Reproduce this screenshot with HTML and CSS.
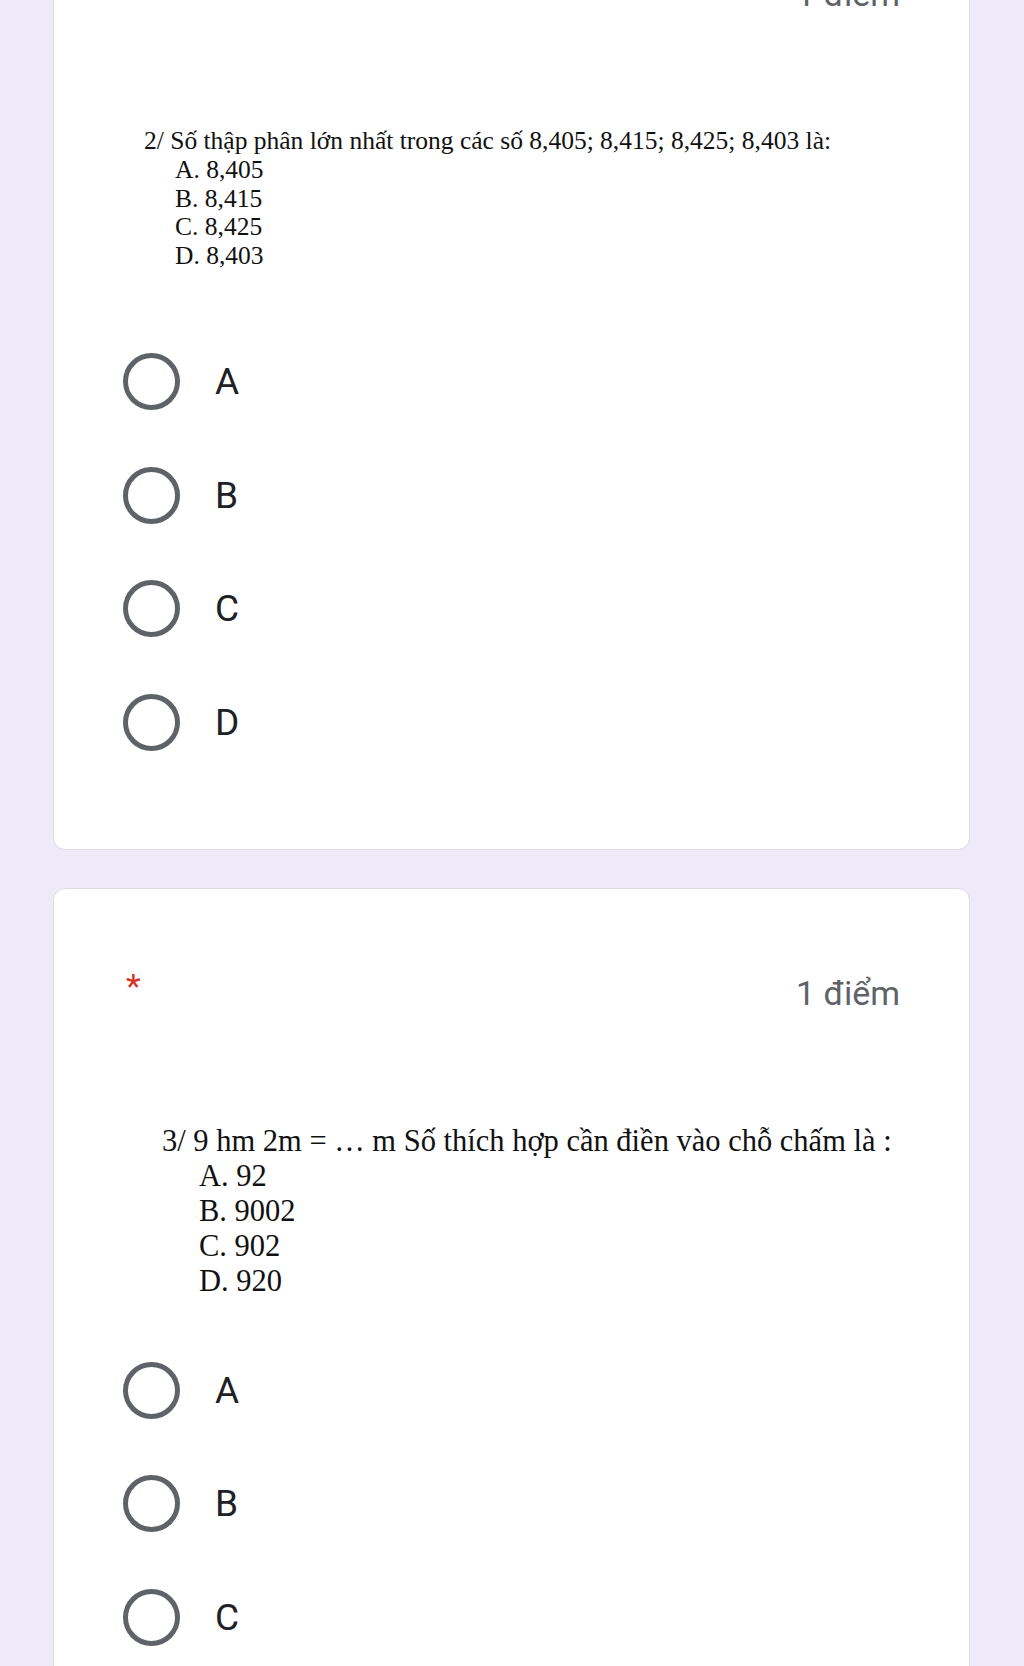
FILE: index.html
```html
<!DOCTYPE html>
<html lang="vi">
<head>
<meta charset="utf-8">
<title>Biểu mẫu</title>
<link rel="stylesheet" href="styles.css">
</head>
<body>
<main class="form">
  <section class="card card-first">
    <div class="card-head">
      <span class="req">*</span>
      <span class="points">1 điểm</span>
    </div>
    <div class="question q-small">
      <p class="q-title">2/ Số thập phân lớn nhất trong các số 8,405; 8,415; 8,425; 8,403 là:</p>
      <ul class="q-choices">
        <li>A. 8,405</li>
        <li>B. 8,415</li>
        <li>C. 8,425</li>
        <li>D. 8,403</li>
      </ul>
    </div>
    <div class="options options-first">
      <label class="option"><span class="radio"></span><span class="opt-label">A</span></label>
      <label class="option"><span class="radio"></span><span class="opt-label">B</span></label>
      <label class="option"><span class="radio"></span><span class="opt-label">C</span></label>
      <label class="option"><span class="radio"></span><span class="opt-label">D</span></label>
    </div>
  </section>

  <section class="card card-second">
    <div class="card-head">
      <span class="req">*</span>
      <span class="points">1 điểm</span>
    </div>
    <div class="question q-large">
      <p class="q-title">3/ 9 hm 2m = … m Số thích hợp cần điền vào chỗ chấm là :</p>
      <ul class="q-choices">
        <li>A. 92</li>
        <li>B. 9002</li>
        <li>C. 902</li>
        <li>D. 920</li>
      </ul>
    </div>
    <div class="options options-second">
      <label class="option"><span class="radio"></span><span class="opt-label">A</span></label>
      <label class="option"><span class="radio"></span><span class="opt-label">B</span></label>
      <label class="option"><span class="radio"></span><span class="opt-label">C</span></label>
      <label class="option"><span class="radio"></span><span class="opt-label">D</span></label>
    </div>
  </section>
</main>
</body>
</html>
```

FILE: styles.css
```css
* {
  box-sizing: border-box;
}

html, body {
  margin: 0;
  padding: 0;
}

body {
  background: #eeeaf8;
  font-family: Roboto, "Noto Sans", Arial, sans-serif;
  color: #202124;
  height: 1666px;
  overflow: hidden;
}

.form {
  width: 917px;
  margin-left: 53px;
  display: flex;
  flex-direction: column;
  gap: 38px;
}

.card {
  background: #ffffff;
  border: 1px solid #dadce0;
  border-radius: 12px;
  padding: 0 69px 0 69px;
}

.card-first {
  margin-top: -111px;
  padding-bottom: 70px;
}

.card-second {
  padding-bottom: 80px;
}

.card-head {
  display: flex;
  justify-content: space-between;
  align-items: flex-start;
  padding-top: 79px;
  height: 126px;
}

.req {
  color: #d93025;
  font-size: 34px;
  line-height: 32px;
  margin-left: 3px;
  margin-top: 2px;
}

.points {
  color: #5f6368;
  font-size: 34px;
  line-height: 40px;
  margin-top: 5px;
}

.question {
  font-family: "Liberation Serif", "Times New Roman", serif;
  color: #111;
}

.q-title,
.q-choices {
  margin: 0;
  padding: 0;
  list-style: none;
}

.q-small {
  font-size: 25.5px;
  line-height: 28.8px;
  padding-left: 21px;
  margin-top: 111px;
}

.q-small .q-choices {
  padding-left: 31px;
}

.q-large {
  font-size: 30.5px;
  line-height: 35px;
  padding-left: 39px;
  margin-top: 109px;
}

.q-large .q-choices {
  padding-left: 37px;
}

.options {
  display: flex;
  flex-direction: column;
}

.options-first {
  margin-top: 54px;
}

.options-second {
  margin-top: 34px;
}

.option {
  display: flex;
  align-items: center;
  height: 113.6px;
}

.radio {
  width: 57px;
  height: 57px;
  border: 5px solid #5f6368;
  border-radius: 50%;
  flex: none;
}

.opt-label {
  font-size: 37px;
  line-height: 1;
  margin-left: 35px;
  color: #202124;
}
```
